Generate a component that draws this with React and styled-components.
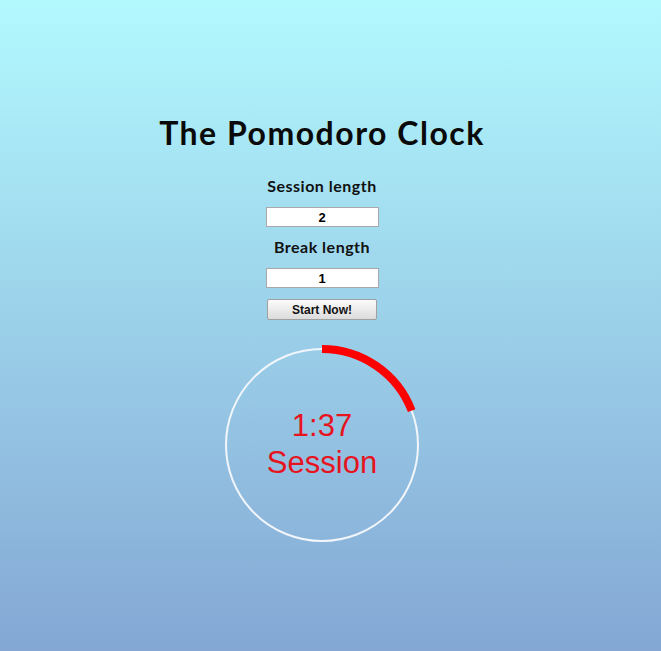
import React from "react";
import styled, { createGlobalStyle } from "styled-components";

const Global = createGlobalStyle`
  html, body { margin: 0; padding: 0; }
  body {
    min-height: 100vh;
    background: linear-gradient(to bottom, #b2f9fe 0%, #84a7d4 100%);
    background-attachment: fixed;
    font-family: "Lato", "DejaVu Sans", sans-serif;
  }
`;

const Page = styled.main`
  min-height: 651px;
  width: 644px;
  display: flex;
  flex-direction: column;
  align-items: center;
  padding-top: 113px;
  box-sizing: border-box;
`;

const Title = styled.h1`
  margin: 0;
  font-size: 32px;
  font-weight: 700;
  color: #0a0a0a;
  letter-spacing: 1.5px;
  line-height: 40px;
`;

const Form = styled.div`
  display: flex;
  flex-direction: column;
  align-items: center;
  margin-top: 23px;
`;

const Label = styled.label`
  font-size: 16px;
  font-weight: 700;
  color: #111;
  line-height: 20px;
  letter-spacing: 0.5px;
  margin-bottom: 11px;
`;

const NumberInput = styled.input`
  width: 113px;
  height: 20px;
  box-sizing: border-box;
  border: 1px solid #a9a9a9;
  background: #fff;
  text-align: center;
  font-family: "Liberation Sans", Arial, sans-serif;
  font-weight: 700;
  font-size: 13px;
  padding: 0;
  margin-bottom: 10px;
`;

const Button = styled.button`
  width: 110px;
  height: 21px;
  margin-top: 1px;
  box-sizing: border-box;
  border: 1px solid #a0a0a0;
  border-radius: 2px;
  background: linear-gradient(to bottom, #fbfbfb, #dcdcdc);
  font-family: "Liberation Sans", Arial, sans-serif;
  font-weight: 700;
  font-size: 12px;
  color: #111;
  padding: 0;
`;

const Dial = styled.div`
  display: grid;
  width: 204px;
  height: 204px;
  margin-top: 23px;
  & > * { grid-area: 1 / 1; }
`;

const Readout = styled.div`
  display: flex;
  flex-direction: column;
  align-items: center;
  justify-content: center;
  font-family: "Liberation Sans", Arial, sans-serif;
  font-size: 31px;
  line-height: 37px;
  color: #e5141e;
  padding-bottom: 3px;
`;

function Ring({ progress }) {
  const r = 96;
  const cx = 102;
  const cy = 102;
  const a = progress * 2 * Math.PI;
  const ex = cx + r * Math.sin(a);
  const ey = cy - r * Math.cos(a);
  const large = progress > 0.5 ? 1 : 0;
  return (
    <svg width="204" height="204" viewBox="0 0 204 204">
      <circle cx={cx} cy={cy} r={r} fill="none" stroke="#f2f6fb" strokeWidth="2" />
      <path
        d={`M ${cx} ${cy - r} A ${r} ${r} 0 ${large} 1 ${ex} ${ey}`}
        fill="none"
        stroke="#ff0000"
        strokeWidth="8"
      />
    </svg>
  );
}

export default function App() {
  return (
    <>
      <Global />
      <Page>
        <Title>The Pomodoro Clock</Title>
        <Form>
          <Label>Session length</Label>
          <NumberInput type="text" defaultValue="2" />
          <Label>Break length</Label>
          <NumberInput type="text" defaultValue="1" />
          <Button>Start Now!</Button>
        </Form>
        <Dial>
          <Ring progress={23 / 120} />
          <Readout>
            <span>1:37</span>
            <span>Session</span>
          </Readout>
        </Dial>
      </Page>
    </>
  );
}
